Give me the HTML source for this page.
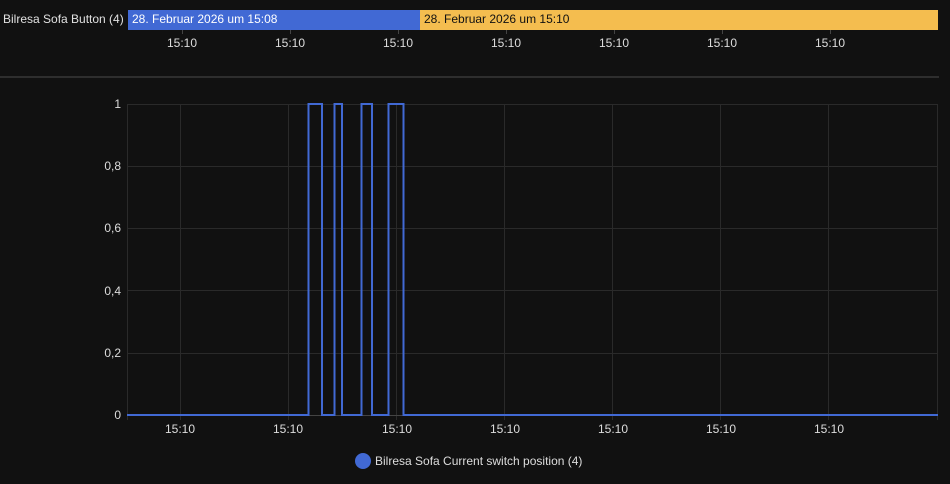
<!DOCTYPE html>
<html><head><style>
body{margin:0;background:#111;width:950px;height:484px;overflow:hidden;font-family:"Liberation Sans",sans-serif;color:#e1e1e1}
.t{position:absolute;font-size:12px;line-height:14px}
</style></head><body>
<div class="t" style="left:3px;top:12px;color:#e1e1e1">Bilresa Sofa Button (4)</div>
<div style="position:absolute;left:128px;top:10px;width:292px;height:20px;background:#4169d4"></div>
<div style="position:absolute;left:420px;top:10px;width:518px;height:20px;background:#f4bd4f"></div>
<div class="t" style="left:132px;top:12px;color:#fff">28. Februar 2026 um 15:08</div>
<div class="t" style="left:424px;top:12px;color:#111">28. Februar 2026 um 15:10</div>
<svg width="950" height="484" style="position:absolute;left:0;top:0" font-family="Liberation Sans, sans-serif" font-size="12" fill="#ddd">
<g stroke="#444" stroke-width="1">
<line x1="182.5" y1="30" x2="182.5" y2="34"/><line x1="290.5" y1="30" x2="290.5" y2="34"/><line x1="398.5" y1="30" x2="398.5" y2="34"/><line x1="506.5" y1="30" x2="506.5" y2="34"/><line x1="614.5" y1="30" x2="614.5" y2="34"/><line x1="722.5" y1="30" x2="722.5" y2="34"/><line x1="830.5" y1="30" x2="830.5" y2="34"/>
</g>
<g text-anchor="middle">
<text x="182" y="47">15:10</text><text x="290" y="47">15:10</text><text x="398" y="47">15:10</text><text x="506" y="47">15:10</text><text x="614" y="47">15:10</text><text x="722" y="47">15:10</text><text x="830" y="47">15:10</text>
</g>
<rect x="0" y="76" width="939" height="2" fill="#2e2e2e"/>
<g stroke="#2a2a2a" stroke-width="1">
<line x1="127" y1="104.5" x2="938" y2="104.5"/><line x1="127" y1="166.5" x2="938" y2="166.5"/><line x1="127" y1="228.5" x2="938" y2="228.5"/><line x1="127" y1="290.5" x2="938" y2="290.5"/><line x1="127" y1="353.5" x2="938" y2="353.5"/>
<line x1="127.5" y1="104" x2="127.5" y2="420"/><line x1="180.5" y1="104" x2="180.5" y2="420"/><line x1="288.5" y1="104" x2="288.5" y2="420"/><line x1="396.5" y1="104" x2="396.5" y2="420"/><line x1="504.5" y1="104" x2="504.5" y2="420"/><line x1="612.5" y1="104" x2="612.5" y2="420"/><line x1="720.5" y1="104" x2="720.5" y2="420"/><line x1="828.5" y1="104" x2="828.5" y2="420"/><line x1="937.5" y1="104" x2="937.5" y2="420"/>
</g>
<line x1="127" y1="415.5" x2="938" y2="415.5" stroke="#444"/>
<g text-anchor="end">
<text x="121" y="108">1</text><text x="121" y="170">0,8</text><text x="121" y="232">0,6</text><text x="121" y="295">0,4</text><text x="121" y="357">0,2</text><text x="121" y="419">0</text>
</g>
<polyline fill="none" stroke="#4169d4" stroke-width="2" points="127,415 308.5,415 308.5,104 322,104 322,415 334.5,415 334.5,104 342,104 342,415 361.5,415 361.5,104 372,104 372,415 388.5,415 388.5,104 403.5,104 403.5,415 938,415"/>
<g text-anchor="middle">
<text x="180" y="433">15:10</text><text x="288" y="433">15:10</text><text x="397" y="433">15:10</text><text x="505" y="433">15:10</text><text x="613" y="433">15:10</text><text x="721" y="433">15:10</text><text x="829" y="433">15:10</text>
</g>
<circle cx="363" cy="461" r="8" fill="#4169d4"/>
<text x="375" y="465">Bilresa Sofa Current switch position (4)</text>
</svg>
</body></html>
